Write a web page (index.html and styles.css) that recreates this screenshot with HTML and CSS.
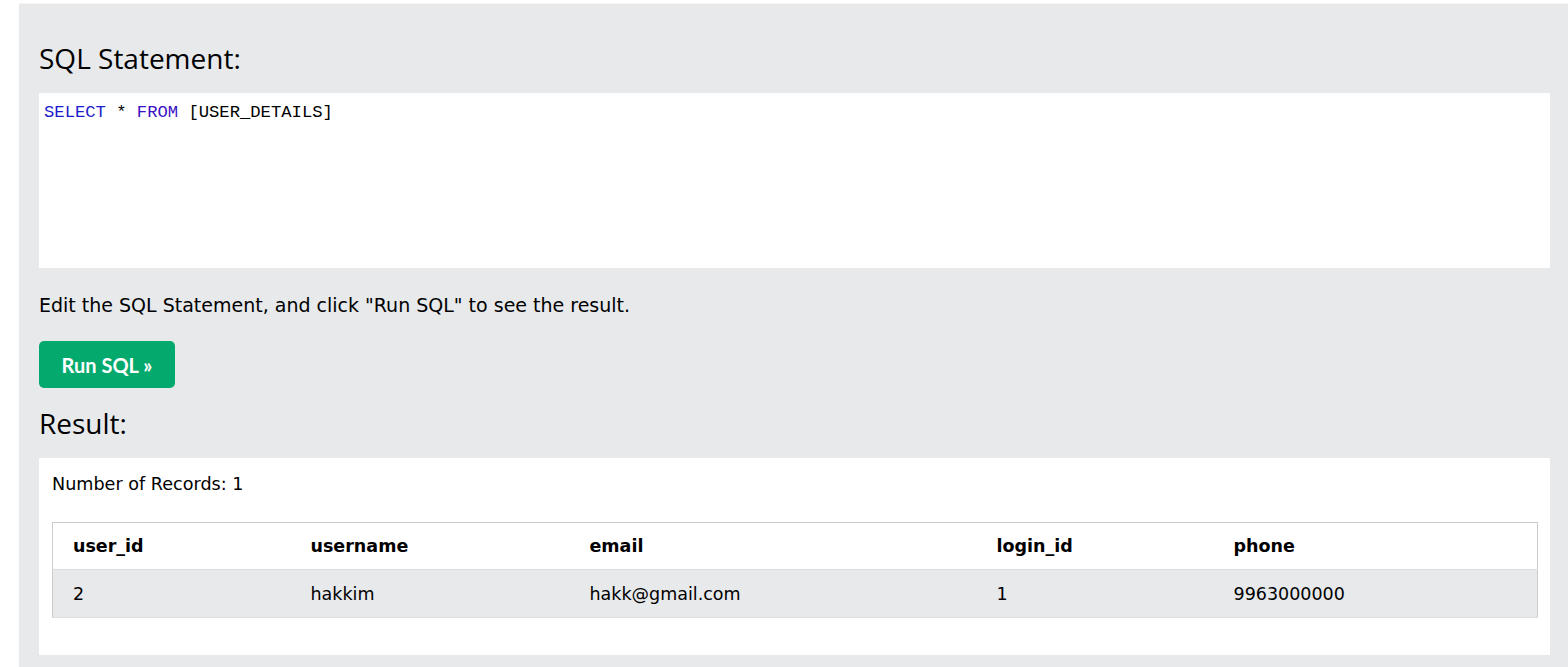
FILE: index.html
```html
<!DOCTYPE html>
<html lang="en">
<head>
<meta charset="utf-8">
<title>SQL Tryit</title>
<link rel="stylesheet" href="styles.css">
</head>
<body>
<main class="panel">
  <h3 class="title">SQL Statement:</h3>
  <div class="code-box">
    <div class="code-line"><span class="kw">SELECT</span> * <span class="kw kw-from">FROM</span> [USER_DETAILS]</div>
  </div>
  <p class="hint">Edit the SQL Statement, and click "Run SQL" to see the result.</p>
  <button class="run-btn" type="button">Run SQL »</button>
  <h3 class="title title-result">Result:</h3>
  <section class="result-box">
    <div class="records">Number of Records: 1</div>
    <table class="result-table">
      <colgroup>
        <col class="c1"><col class="c2"><col class="c3"><col class="c4"><col class="c5">
      </colgroup>
      <thead>
        <tr><th>user_id</th><th>username</th><th>email</th><th>login_id</th><th>phone</th></tr>
      </thead>
      <tbody>
        <tr><td>2</td><td>hakkim</td><td>hakk@gmail.com</td><td>1</td><td>9963000000</td></tr>
      </tbody>
    </table>
  </section>
</main>
</body>
</html>
```
FILE: styles.css
```css
html, body {
  margin: 0;
  padding: 0;
  overflow: hidden;
  background: #ffffff;
  height: 100%;
}

body {
  font-family: "DejaVu Sans", Verdana, sans-serif;
  color: #000;
}

.panel {
  margin: 4px 0 0 19px;
  width: 1511px;
  padding: 37px 20px 40px 20px;
  background: #e7e9eb;
  box-shadow: 0 -1px 1px rgba(0,0,0,0.04);
}

.title {
  margin: 0;
  font-family: "Open Sans", "Noto Sans", sans-serif;
  font-weight: 400;
  font-size: 28px;
  line-height: 34px;
  height: 34px;
}

.code-box {
  margin-top: 18px;
  height: 175px;
  box-sizing: border-box;
  background: #fff;
  padding: 10px 5px 0 5px;
}

.code-line {
  font-family: "Liberation Mono", "DejaVu Sans Mono", monospace;
  font-size: 17.2px;
  line-height: 20px;
  color: #000;
}

.kw { color: #1c1ccc; }
.kw-from { color: #3a10c4; }

.hint {
  margin: 25px 0 0 0;
  font-size: 19px;
  line-height: 24px;
}

.run-btn {
  display: block;
  margin-top: 24px;
  width: 136px;
  height: 47px;
  border: 0;
  border-radius: 5px;
  background: #04aa6d;
  color: #fff;
  font-family: "Lato", "Open Sans", sans-serif;
  font-weight: 700;
  font-size: 20px;
  padding: 0;
}

.title-result {
  margin-top: 18px;
}

.result-box {
  margin-top: 18px;
  background: #fff;
  padding: 14px 12px 37px 13px;
}

.records {
  font-size: 17.6px;
  line-height: 24px;
}

.result-table {
  margin-top: 26px;
  width: 100%;
  border-collapse: collapse;
  border: 1px solid #ccc;
  table-layout: fixed;
  font-size: 17.5px;
}

.c1 { width: 248px; }
.c2 { width: 279px; }
.c3 { width: 407px; }
.c4 { width: 237px; }
.c5 { width: auto; }

.result-table th,
.result-table td {
  text-align: left;
  padding: 0 10px;
  height: 46px;
  border-bottom: 1px solid #ddd;
  vertical-align: middle;
}

.result-table td {
  height: 47px;
}

.result-table th:first-child,
.result-table td:first-child {
  padding-left: 20px;
}

.result-table th {
  font-weight: 700;
}

.result-table tbody tr {
  background: #e7e9eb;
}
```
